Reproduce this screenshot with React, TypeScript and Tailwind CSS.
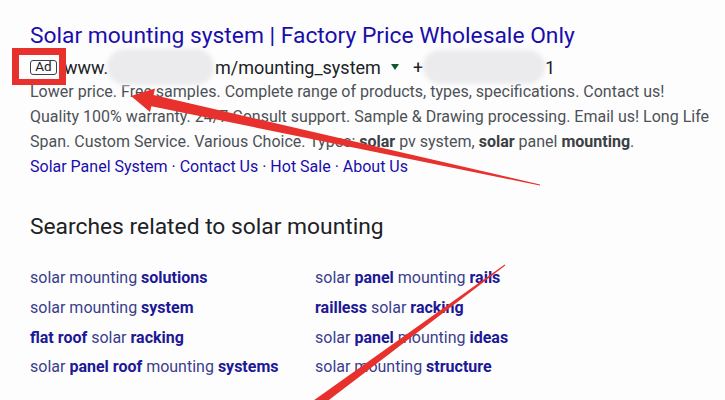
import React from "react";

const B = ({ children }: { children: React.ReactNode }) => (
  <span className="font-bold text-[#1c1896]">{children}</span>
);

function Related({ parts }: { parts: [string, boolean][] }) {
  return (
    <div className="h-[29.8px] leading-[29.8px] whitespace-nowrap text-[16px] text-[#3a3d8c]">
      {parts.map(([t, b], i) =>
        b ? (
          <B key={i}>{t}</B>
        ) : (
          <span key={i}>{t}</span>
        )
      )}
    </div>
  );
}

export default function App() {
  const left: [string, boolean][][] = [
    [["solar mounting ", false], ["solutions", true]],
    [["solar mounting ", false], ["system", true]],
    [["flat roof", true], [" solar ", false], ["racking", true]],
    [["solar ", false], ["panel roof", true], [" mounting ", false], ["systems", true]],
  ];
  const right: [string, boolean][][] = [
    [["solar ", false], ["panel", true], [" mounting ", false], ["rails", true]],
    [["railless", true], [" solar ", false], ["racking", true]],
    [["solar ", false], ["panel", true], [" mounting ", false], ["ideas", true]],
    [["solar mounting ", false], ["structure", true]],
  ];
  return (
    <div
      className="relative w-[725px] h-[400px] overflow-hidden bg-[#fdfdfe]"
      style={{ fontFamily: "Roboto, 'Noto Sans', sans-serif" }}
    >
      <div className="pl-[30px] pt-[22px]">
        <div className="text-[22.8px] leading-[28px] text-[#1a0dab] whitespace-nowrap">
          Solar mounting system | Factory Price Wholesale Only
        </div>
        <div className="mt-[5px] h-[24px] flex items-center text-[18px] text-[#202124] whitespace-nowrap">
          <span className="shrink-0 w-[27px] h-[15px] rounded-[3px] border-[1.5px] border-[#3c4043] flex items-center justify-center text-[13.5px] leading-none text-[#202124]">
            Ad
          </span>
          <span className="ml-[7px] w-[42px] shrink-0">www.</span>
          <span className="shrink-0 ml-[1px] w-[107px] h-[36px] rounded-[18px] bg-[#ebebed] blur-[2px]" />
          <span className="ml-[1px]">m/mounting_system</span>
          <svg className="ml-[10px] shrink-0" width="8" height="7" viewBox="0 0 8 7">
            <path d="M0 0 L8 0 L4 6 Z" fill="#0b5a27" />
          </svg>
          <span className="ml-[14px]">+</span>
          <span className="shrink-0 w-[122px] h-[34px] rounded-[17px] bg-[#ebebed] blur-[2px]" />
          <span>1</span>
        </div>
        <div className="text-[16px] leading-[25px] text-[#4d5156] whitespace-nowrap">
          <div>Lower price. Free samples. Complete range of products, types, specifications. Contact us!</div>
          <div>Quality 100% warranty. 24/7 Consult support. Sample &amp; Drawing processing. Email us! Long Life</div>
          <div>
            Span. Custom Service. Various Choice. Types: <b className="text-[#3c4043]">solar</b> pv system,{" "}
            <b className="text-[#3c4043]">solar</b> panel <b className="text-[#3c4043]">mounting</b>.
          </div>
          <div className="text-[#1a0dab]">Solar Panel System · Contact Us · Hot Sale · About Us</div>
        </div>
        <div className="mt-[34px] text-[22.8px] leading-[28px] text-[#202124] whitespace-nowrap">
          Searches related to solar mounting
        </div>
        <div className="mt-[22px] grid grid-cols-[285px_1fr]">
          <div>
            {left.map((p, i) => (
              <Related key={i} parts={p} />
            ))}
          </div>
          <div>
            {right.map((p, i) => (
              <Related key={i} parts={p} />
            ))}
          </div>
        </div>
      </div>

      {/* annotations */}
      <div className="absolute left-[12px] top-[48px] w-[54px] h-[37px] border-[7px] border-b-[6px] border-[#e8302c]" />
      <svg className="absolute left-0 top-0 pointer-events-none" width="725" height="400" viewBox="0 0 725 400">
        <polygon
          points="131,96 155,88.5 153.6,95 540,184.5 540,185.5 151.4,106.2 150,112"
          fill="#e8302c"
        />
        <polygon points="505.3,265.4 304,419 296,413 504.7,264.6" fill="#e8302c" />
      </svg>
    </div>
  );
}
